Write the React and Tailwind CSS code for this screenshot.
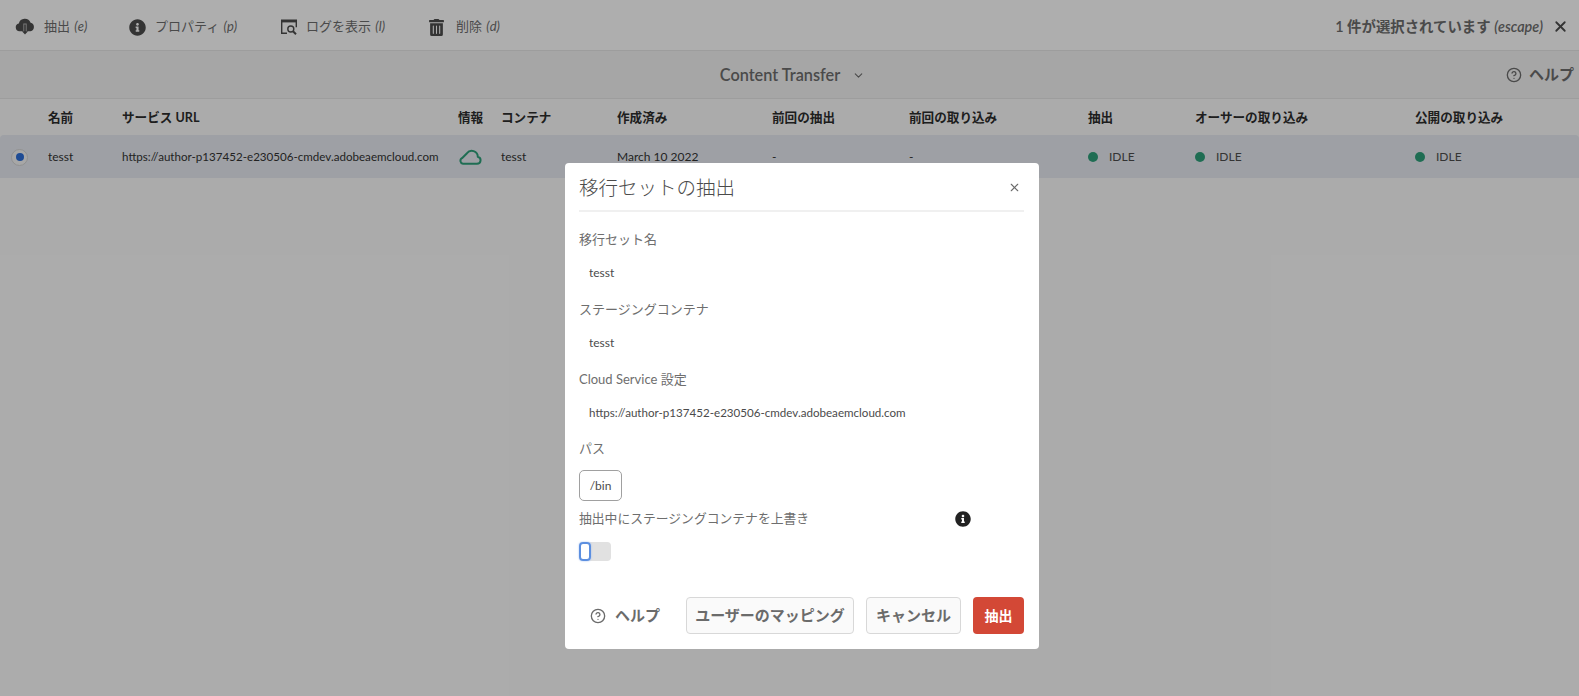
import { ChevronDown, CircleHelp, X } from 'lucide-react'
import { FaInfoCircle, FaTrashAlt } from 'react-icons/fa'

const FONT = "font-['Lato','Noto_Sans_CJK_JP',sans-serif]"
const SERVICE_URL = 'https://author-p137452-e230506-cmdev.adobeaemcloud.com'

// shared by the header row and the data row
const COLS = 'grid grid-cols-[48px_74px_336px_43px_116px_155px_137px_179px_107px_220px_1fr] items-center'

function LogIcon() {
  return (
    <svg width="18" height="18" viewBox="0 0 18 18" fill="none" stroke="#4b4b4b" strokeWidth="1.4">
      <path d="M7 15.2H1.7V2.2h14.6v7" />
      <path d="M1.7 3.2h14.6" strokeWidth="2.4" />
      <circle cx="10.8" cy="11" r="3" />
      <path d="M13 13.2l3 3" strokeWidth="2" />
    </svg>
  )
}

function CloudDownIcon() {
  return (
    <svg width="20" height="18" viewBox="0 0 20 18" className="ml-[-1px]">
      <path
        fill="#4b4b4b"
        d="M4.5 13.2a3.9 3.9 0 0 1-.7-7.7A6.2 6.2 0 0 1 15.6 4.8a4.3 4.3 0 0 1-.1 8.4z"
      />
      <path d="M10 5.5v9" stroke="#aeaeae" strokeWidth="3.4" />
      <path d="M10 6.5v8.5" stroke="#4b4b4b" strokeWidth="1.5" />
      <path d="M7 13.2l3 3.3 3-3.3z" fill="#4b4b4b" />
    </svg>
  )
}

function CloudOutline() {
  return (
    <svg
      width="24"
      height="19"
      viewBox="0 0 24 19"
      fill="none"
      stroke="#2d9d78"
      strokeWidth="2"
      strokeLinejoin="round"
      className="mb-[2px]"
    >
      <path d="M5 16.8H19a3.6 3.6 0 0 0 .8-7.1A6 6 0 0 0 9 6.2L4 11.2A3 3 0 0 0 5 16.8z" />
    </svg>
  )
}

function ToolItem({ icon, label, shortcut, className, iconClass }) {
  return (
    <div className={'flex items-center ' + className}>
      <span className={'flex justify-start ' + iconClass}>{icon}</span>
      <span className="text-[13px] text-[#6b6b6b]">
        {label} <i className="ml-[1px]">({shortcut})</i>
      </span>
    </div>
  )
}

function Status() {
  return (
    <div className="flex items-center gap-[11px] text-xs text-[#4b4b4b]">
      <span className="mb-[1px] h-[10px] w-[10px] rounded-full bg-[#2d9d78]" />
      IDLE
    </div>
  )
}

function ReadField({ label, value }) {
  return (
    <div>
      <div className="text-[13px] leading-5 text-[#6e6e6e]">{label}</div>
      <div className="mt-[14px] h-[20px] pl-[10px] text-xs leading-5 text-[#4b4b4b]">{value}</div>
    </div>
  )
}

function Modal() {
  return (
    <div className="absolute left-[565px] top-[163px] h-[486px] w-[474px] rounded bg-white pl-[14px] pr-[15px]">
      <div className="flex h-[49px] items-center justify-between border-b-2 border-[#f0f0f0] pt-[2px]">
        <span className="text-[19.5px] font-light text-[#4b4b4b]">移行セットの抽出</span>
        <X size={13} className="mr-[3px] text-[#6b6b6b]" />
      </div>

      <div className="mt-[17px] flex flex-col gap-[16px]">
        <ReadField label="移行セット名" value="tesst" />
        <ReadField label="ステージングコンテナ" value="tesst" />
        <ReadField label="Cloud Service 設定" value={<span className="text-[11.6px]">{SERVICE_URL}</span>} />
      </div>

      <div className="mt-[15px] text-[13px] leading-5 text-[#6e6e6e]">パス</div>
      <div className="mt-[12px] flex h-[31px] w-[43px] items-center justify-center rounded-[5px] border-[1.5px] border-[#a0a0a0] bg-white text-xs text-[#4b4b4b]">
        /bin
      </div>

      <div className="mt-[8px] flex h-5 items-center">
        <span className="text-[12.8px] text-[#6e6e6e]">抽出中にステージングコンテナを上書き</span>
        <FaInfoCircle size={16} className="ml-[146px] text-[#222222]" />
      </div>

      <div className="relative mt-[13px] h-[19px] w-[32px] rounded bg-[#e1e1e1]">
        <span className="absolute left-0 top-0 h-[19px] w-[12px] rounded bg-white shadow-[0_0_2px_#9dbcf0] ring-2 ring-inset ring-[#5c8fe0]" />
      </div>

      <div className="mt-[36px] flex h-[37px] items-center justify-end">
        <CircleHelp size={16} className="mr-[9px] text-[#6b6b6b]" />
        <span className="mr-[26px] text-[15px] font-bold text-[#6b6b6b]">ヘルプ</span>
        <button className="mr-[12px] h-full w-[168px] rounded border border-[#d8d8d8] bg-[#fafafa] text-[15px] font-bold text-[#6b6b6b]">
          ユーザーのマッピング
        </button>
        <button className="mr-[12px] h-full w-[95px] rounded border border-[#d8d8d8] bg-[#fafafa] text-[15px] font-bold text-[#6b6b6b]">
          キャンセル
        </button>
        <button className="h-full w-[51px] rounded bg-[#d34836] text-[14px] font-bold text-white">抽出</button>
      </div>
    </div>
  )
}

export default function App() {
  return (
    <div className={'relative h-[696px] w-[1579px] overflow-hidden bg-[#f5f5f5] ' + FONT}>
      {/* action bar */}
      <div className="flex h-[51px] items-center border-b border-[#e1e1e1] bg-[#f9f9f9] pl-[16px] pr-[10px] pt-[4px]">
        <ToolItem className="w-[113px]" iconClass="w-[28px]" icon={<CloudDownIcon />} label="抽出" shortcut="e" />
        <ToolItem
          className="w-[151px]"
          iconClass="w-[26px]"
          icon={<FaInfoCircle size={17} className="text-[#4b4b4b]" />}
          label="プロパティ"
          shortcut="p"
        />
        <ToolItem className="w-[148px]" iconClass="w-[26px]" icon={<LogIcon />} label="ログを表示" shortcut="l" />
        <ToolItem
          iconClass="w-[28px]"
          icon={<FaTrashAlt size={17} className="text-[#4b4b4b]" />}
          label="削除"
          shortcut="d"
        />
        <div className="ml-auto flex items-center gap-[9px]">
          <span className="text-[14.4px] font-semibold text-[#6b6b6b]">
            1 件が選択されています <i className="font-semibold">(escape)</i>
          </span>
          <X size={17} strokeWidth={2.5} className="text-[#4b4b4b]" />
        </div>
      </div>

      {/* title bar */}
      <div className="relative flex h-[48px] items-center justify-center border-b border-[#e1e1e1] bg-[#eeeeee] pt-[1px]">
        <div className="ml-[6px] flex items-center gap-[12px]">
          <span className="text-[16.3px] font-semibold text-[#6b6b6b]">Content Transfer</span>
          <ChevronDown size={13} className="text-[#6b6b6b]" />
        </div>
        <div className="absolute right-[5px] top-0 flex h-full items-center gap-[7px]">
          <CircleHelp size={16} className="text-[#6b6b6b]" />
          <span className="text-[15px] font-bold text-[#6b6b6b]">ヘルプ</span>
        </div>
      </div>

      {/* table */}
      <div className={COLS + ' h-[36px] pt-[3px] text-[12.6px] font-bold text-[#2c2c2c]'}>
        <span />
        <span>名前</span>
        <span>サービス URL</span>
        <span>情報</span>
        <span>コンテナ</span>
        <span>作成済み</span>
        <span>前回の抽出</span>
        <span>前回の取り込み</span>
        <span>抽出</span>
        <span>オーサーの取り込み</span>
        <span>公開の取り込み</span>
      </div>
      <div className={COLS + ' h-[43px] rounded-t-sm bg-[#e2e6ec] pt-[1px] text-xs text-[#323232]'}>
        <span className="ml-[11px] flex h-[17px] w-[17px] items-center justify-center rounded-full border border-[#d0d0d0] bg-[#f0f0f0]">
          <span className="h-2 w-2 rounded-full bg-[#2b6cd4]" />
        </span>
        <span>tesst</span>
        <span className="text-[11.6px]">{SERVICE_URL}</span>
        <CloudOutline />
        <span>tesst</span>
        <span>March 10 2022</span>
        <span>-</span>
        <span>-</span>
        <Status />
        <Status />
        <Status />
      </div>

      {/* dim layer + dialog */}
      <div className="absolute inset-0 bg-black/30" />
      <Modal />
    </div>
  )
}
